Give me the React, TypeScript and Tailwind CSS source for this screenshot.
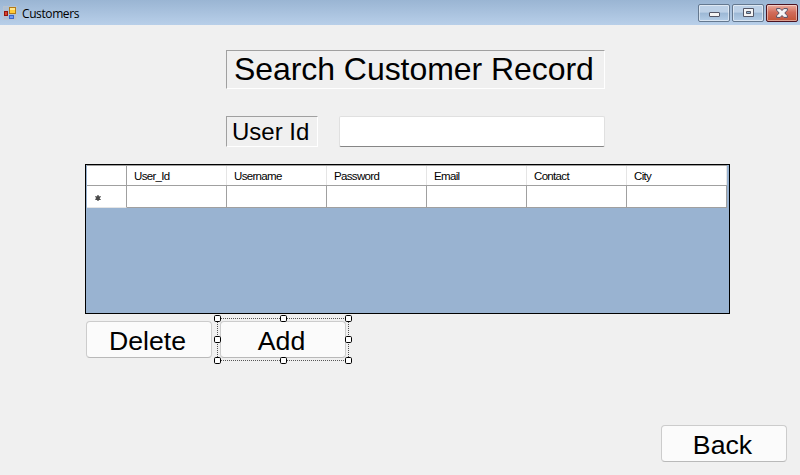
const columns = ['User_Id', 'Username', 'Password', 'Email', 'Contact', 'City'];
const handles = [
  [0, 0], [66, 0], [131, 0],
  [0, 21], [131, 21],
  [0, 42], [66, 42], [131, 42],
];

function TitleBar() {
  const frame =
    'flex h-[18px] w-8 items-center justify-center rounded-[2px] border border-[#64788f] shadow-[inset_0_0_0_1px_#ffffff80]';
  return (
    <header className="flex h-[25px] items-start bg-linear-to-b from-[#9ab5d3] to-[#b8cfe9] pl-[3px] pr-[2px]">
      <svg className="mt-[6px] h-[14px] w-[14px]" viewBox="0 0 14 14">
        <rect x=".5" y=".5" width="13" height="13" fill="#b0c0d2" stroke="#c4c6c8" strokeDasharray="1 1" />
        <rect x="6.5" y="1.5" width="6" height="6" fill="#ffcb38" stroke="#b27a16" />
        <path d="M7 2h5v2H7z" fill="#ffe68c" />
        <rect x="1.5" y="5.5" width="3" height="4" fill="#d8422c" stroke="#94150d" />
        <rect x="6.5" y="9.5" width="4" height="3" fill="#6a98f4" stroke="#3c65c7" />
      </svg>
      <span className="ml-[5px] mt-[5px] grow font-['Open_Sans',sans-serif] text-[12px] leading-[17px] tracking-[-0.4px]">Customers</span>
      <div className="mt-1 flex gap-[2px]">
        <button className={`${frame} bg-linear-to-b from-[#bdd1e7] from-45% via-[#9cb8d5] via-50% to-[#b4cde7]`}>
          <svg className="mt-[3px]" width="11" height="5" viewBox="0 0 11 5">
            <rect x=".5" y=".5" width="10" height="4" rx=".5" fill="#f5f5f5" stroke="#535666" />
          </svg>
        </button>
        <button className={`${frame} bg-linear-to-b from-[#bdd1e7] from-45% via-[#9cb8d5] via-50% to-[#b4cde7]`}>
          <svg className="-mt-px" width="11" height="9" viewBox="0 0 11 9">
            <path d="M.5.5h10v8H.5z" fill="#f5f5f5" stroke="#535666" />
            <path d="M3.5 3.5h4v2h-4z" fill="#8db3d2" stroke="#535666" />
          </svg>
        </button>
        <button className="flex h-[18px] w-8 items-center justify-center rounded-[2px] border border-[#4b1220] bg-linear-to-b from-[#e8a698] from-5% via-[#d16d5c] via-45% to-[#c35436] shadow-[inset_0_0_0_1px_#ffffff70]">
          <svg className="-mt-px" width="12" height="10" viewBox="0 0 12 10">
            <path d="M.6.6h3.6L6 2.5 7.8.6h3.6v1.6L8.8 5l2.6 2.8v1.6H7.8L6 7.5 4.2 9.4H.6V7.8L3.2 5 .6 2.2z" fill="#f6f6f6" stroke="#565064" />
          </svg>
        </button>
      </div>
    </header>
  );
}

function FormButton({ label }: { label: string }) {
  return (
    <button className="flex h-[37px] w-[126px] items-center justify-center rounded-[4px] border border-[#cccccc] border-b-[#b9b9b9] bg-[#fbfbfb] pr-[3px] pt-[3px] text-[26.67px] leading-[30px]">
      {label}
    </button>
  );
}

export default function App() {
  return (
    <div className="h-[475px] w-[800px] overflow-hidden bg-[#f0f0f0] font-['Liberation_Sans',Arial,sans-serif] text-black">
      <TitleBar />
      <main>
        <h1 className="ml-[226px] mt-[25px] h-[39px] w-[379px] border border-b-white border-l-[#a0a0a0] border-r-white border-t-[#a0a0a0] pl-[7px] text-[32px] leading-[37px] tracking-[-0.06px] whitespace-nowrap">
          Search Customer Record
        </h1>
        <div className="ml-[226px] mt-[27px] flex gap-[21px]">
          <label htmlFor="user-id" className="h-[31px] w-[92px] border border-b-white border-l-[#a0a0a0] border-r-white border-t-[#a0a0a0] pl-[5px] text-[24px] leading-[30px] whitespace-nowrap">
            User Id
          </label>
          <input id="user-id" className="h-[31px] w-[266px] rounded-[2px] border border-[#e0e0e0] border-b-[#868686] bg-white outline-none" />
        </div>

        <section className="ml-[85px] mt-[17px] h-[150px] w-[645px] border border-black bg-[#99b3d1] pl-px">
          <div className="w-[640px] border-t border-[#a0a0a0] text-[11.5px] tracking-[-0.67px]">
            <div className="flex h-5 border-b border-[#a0a0a0] bg-white">
              <div className="w-10 border-r border-[#a0a0a0]" />
              {columns.map((name) => (
                <div key={name} className="w-[100px] border-r border-[#e5e5e5] pl-[7px] leading-[20px]">{name}</div>
              ))}
            </div>
            <div className="flex h-[22px] bg-white">
              <div className="flex w-10 items-center border-r border-b border-r-[#a0a0a0] border-b-[#e5e5e5] pl-[8px] pt-[2px]">
                <svg width="6" height="6" viewBox="0 0 6 6">
                  <circle cx="3" cy="3" r="2" fill="#484848" />
                  <path d="M3 0v6M.3 1.5l5.4 3M.3 4.5l5.4-3" stroke="#484848" strokeWidth="1.3" />
                </svg>
              </div>
              {columns.map((name) => (
                <div key={name} className="w-[100px] border-r border-b border-[#a0a0a0]" />
              ))}
            </div>
          </div>
        </section>

        <div className="ml-[86px] mt-[7px] flex gap-2">
          <FormButton label="Delete" />
          <div className="relative">
            <FormButton label="Add" />
            <svg className="absolute -left-[6px] -top-[6px]" width="138" height="49" viewBox="0 0 138 49">
              <path d="M3 3.5h132M3 45.5h132M3.5 3v43M134.5 3v43" fill="none" stroke="#555" strokeDasharray="1 1" shapeRendering="crispEdges" />
              {handles.map(([x, y]) => (
                <rect key={`${x}-${y}`} x={x + 0.5} y={y + 0.5} width="6" height="6" rx="1.2" fill="white" stroke="black" />
              ))}
            </svg>
          </div>
        </div>
        <div className="mt-[67px] flex justify-end pr-[13px]">
          <FormButton label="Back" />
        </div>
      </main>
    </div>
  );
}
